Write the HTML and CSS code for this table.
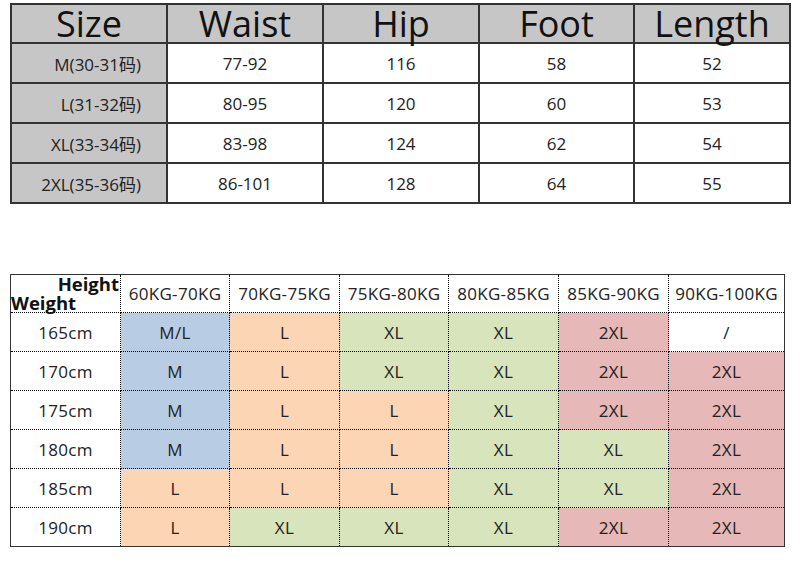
FILE: index.html
```html
<!DOCTYPE html>
<html lang="zh">
<head>
<meta charset="utf-8">
<title>Size Chart</title>
<link rel="stylesheet" href="styles.css">
</head>
<body>
<div class="page">
  <table class="size-table">
    <colgroup>
      <col class="c1"><col class="c2"><col class="c3"><col class="c4"><col class="c5">
    </colgroup>
    <thead>
      <tr><th>Size</th><th>Waist</th><th>Hip</th><th>Foot</th><th>Length</th></tr>
    </thead>
    <tbody>
      <tr><td class="size">M(30-31码)</td><td>77-92</td><td>116</td><td>58</td><td>52</td></tr>
      <tr><td class="size">L(31-32码)</td><td>80-95</td><td>120</td><td>60</td><td>53</td></tr>
      <tr><td class="size">XL(33-34码)</td><td>83-98</td><td>124</td><td>62</td><td>54</td></tr>
      <tr><td class="size">2XL(35-36码)</td><td>86-101</td><td>128</td><td>64</td><td>55</td></tr>
    </tbody>
  </table>

  <table class="fit-table">
    <colgroup>
      <col class="f0"><col class="f1"><col class="f2"><col class="f3"><col class="f4"><col class="f5"><col class="f6">
    </colgroup>
    <thead>
      <tr>
        <th class="corner"><span class="h">Height</span><span class="w">Weight</span></th>
        <th>60KG-70KG</th><th>70KG-75KG</th><th>75KG-80KG</th><th>80KG-85KG</th><th>85KG-90KG</th><th>90KG-100KG</th>
      </tr>
    </thead>
    <tbody>
      <tr><td class="ht">165cm</td><td class="b">M/L</td><td class="o">L</td><td class="g">XL</td><td class="g">XL</td><td class="r">2XL</td><td class="n">/</td></tr>
      <tr><td class="ht">170cm</td><td class="b">M</td><td class="o">L</td><td class="g">XL</td><td class="g">XL</td><td class="r">2XL</td><td class="r">2XL</td></tr>
      <tr><td class="ht">175cm</td><td class="b">M</td><td class="o">L</td><td class="o">L</td><td class="g">XL</td><td class="r">2XL</td><td class="r">2XL</td></tr>
      <tr><td class="ht">180cm</td><td class="b">M</td><td class="o">L</td><td class="o">L</td><td class="g">XL</td><td class="g">XL</td><td class="r">2XL</td></tr>
      <tr><td class="ht">185cm</td><td class="o">L</td><td class="o">L</td><td class="o">L</td><td class="g">XL</td><td class="g">XL</td><td class="r">2XL</td></tr>
      <tr><td class="ht">190cm</td><td class="o">L</td><td class="g">XL</td><td class="g">XL</td><td class="g">XL</td><td class="r">2XL</td><td class="r">2XL</td></tr>
    </tbody>
  </table>
</div>
</body>
</html>
```

FILE: styles.css
```css
html, body {
  margin: 0;
  padding: 0;
  background: #ffffff;
}

body {
  font-family: "Open Sans", "Noto Sans CJK SC", sans-serif;
  color: #222222;
}

.page {
  padding: 3px 0 0 10px;
  display: flex;
  flex-direction: column;
  gap: 70px;
}

/* ---------- Top size table ---------- */
.size-table {
  border-collapse: collapse;
  table-layout: fixed;
  width: 779px;
}

.size-table col.c1 { width: 156px; }
.size-table col.c2 { width: 156px; }
.size-table col.c3 { width: 156px; }
.size-table col.c4 { width: 155px; }
.size-table col.c5 { width: 156px; }

.size-table th,
.size-table td {
  border: 2px solid #333333;
  padding: 0;
  text-align: center;
  vertical-align: middle;
}

.size-table th {
  background: #c6c6c6;
  font-weight: 400;
  font-size: 36px;
  line-height: 36px;
  height: 37px;
  color: #111111;
  overflow: visible;
}

.size-table td {
  height: 38px;
  font-size: 17px;
  color: #222222;
}

.size-table td.size {
  background: #c6c6c6;
  text-align: right;
  padding-right: 25px;
}

/* ---------- Bottom fit table ---------- */
.fit-table {
  border-collapse: collapse;
  table-layout: fixed;
  width: 774px;
}

.fit-table col.f0 { width: 110px; }
.fit-table col.f1 { width: 109px; }
.fit-table col.f2 { width: 110px; }
.fit-table col.f3 { width: 109px; }
.fit-table col.f4 { width: 110px; }
.fit-table col.f5 { width: 110px; }
.fit-table col.f6 { width: 116px; }

.fit-table th,
.fit-table td {
  border: 1px dotted #000000;
  padding: 0;
  text-align: center;
  vertical-align: middle;
  font-size: 17px;
  font-weight: 400;
  letter-spacing: 0.3px;
}

.fit-table tr > :first-child { border-left: 1px solid #333333; }
.fit-table tr > :last-child { border-right: 1px solid #333333; }
.fit-table thead th { border-top: 1px solid #333333; height: 37px; }
.fit-table tbody tr:last-child td { border-bottom: 1px solid #333333; }

.fit-table td { height: 38px; }

.fit-table th.corner {
  padding: 0;
}

.corner .h,
.corner .w {
  display: block;
  font-weight: 700;
  font-size: 18.5px;
  line-height: 17px;
  letter-spacing: 0;
  color: #111111;
}

.corner .h {
  text-align: right;
  padding-right: 1px;
  margin-top: -1px;
}

.corner .w {
  text-align: left;
  margin-top: 2px;
}

.fit-table .b { background: #b8cce4; }
.fit-table .o { background: #fcd5b4; }
.fit-table .g { background: #d8e4bc; }
.fit-table .r { background: #e6b8b7; }
.fit-table .n { background: #ffffff; }
```
